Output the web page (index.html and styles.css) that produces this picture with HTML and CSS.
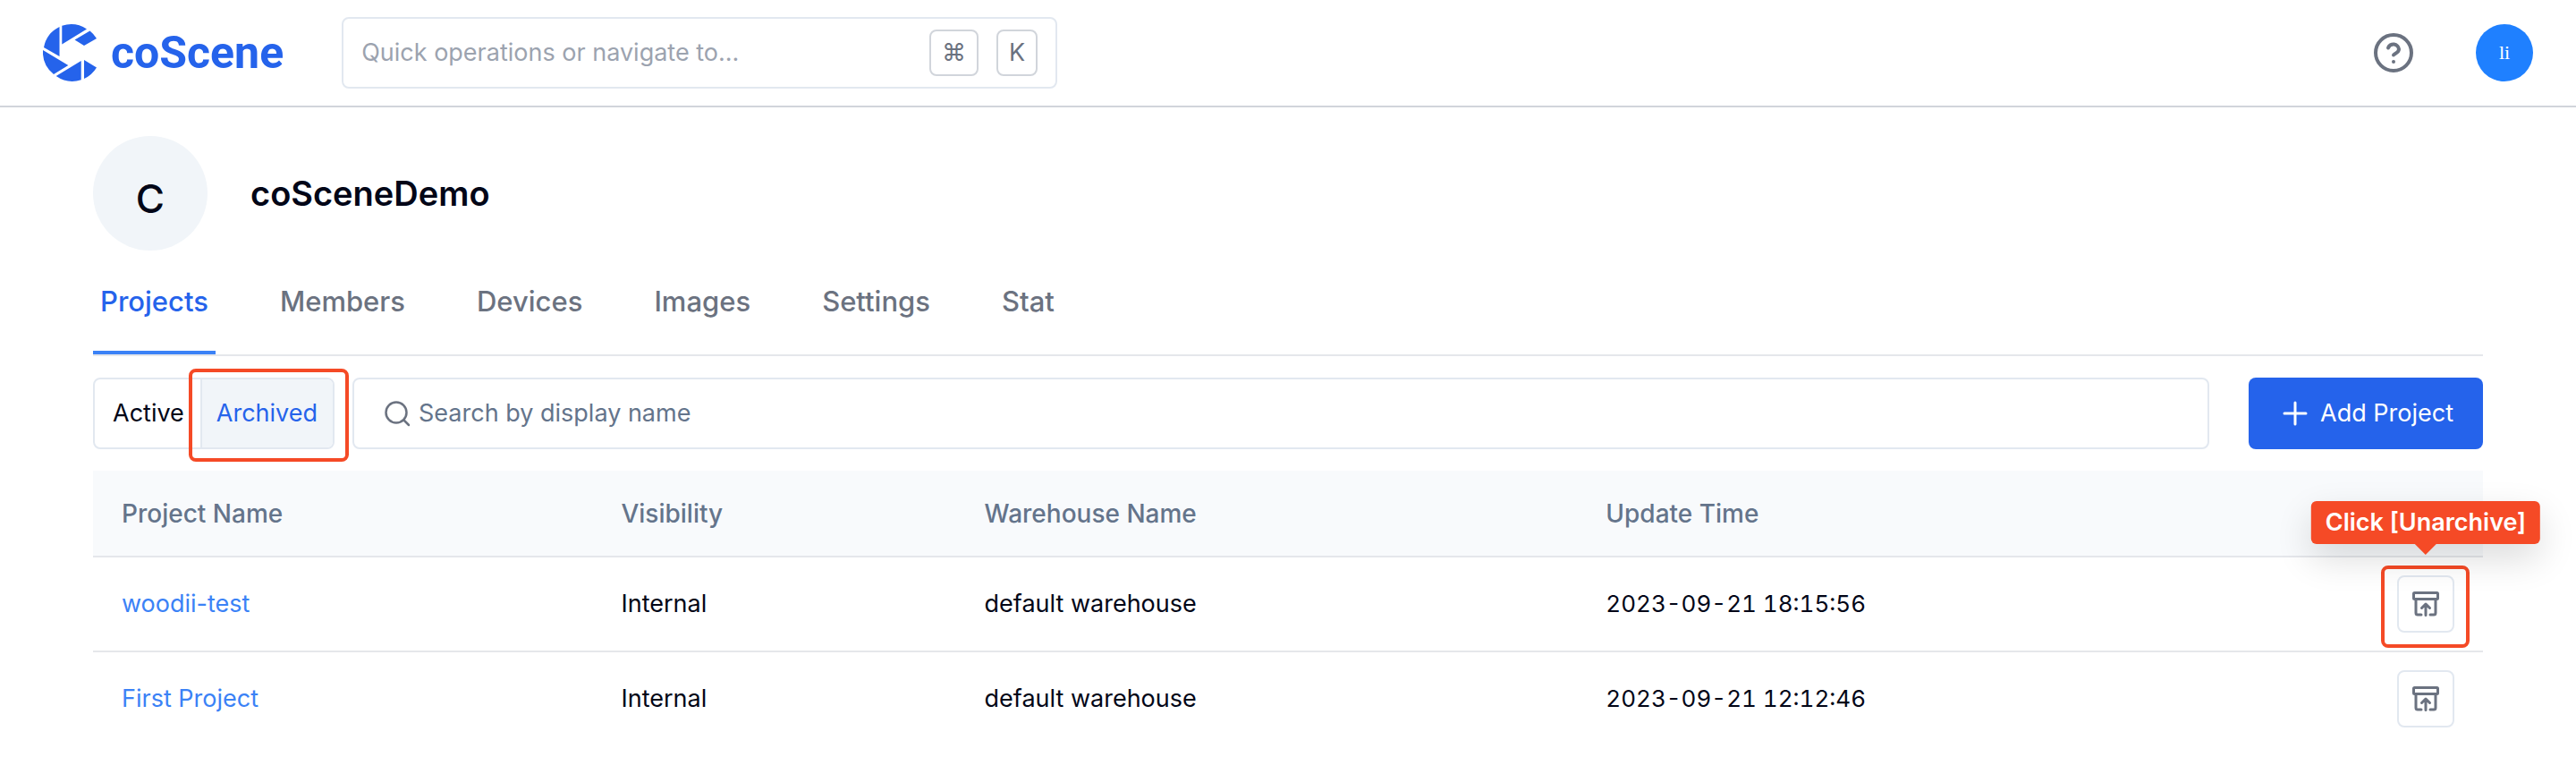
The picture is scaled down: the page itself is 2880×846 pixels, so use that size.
FILE: index.html
```html
<!DOCTYPE html>
<html lang="en">
<head>
<meta charset="utf-8">
<title>coScene</title>
<link rel="stylesheet" href="styles.css">
</head>
<body>
<svg class="sprite" aria-hidden="true">
  <symbol id="unarchive" viewBox="0 0 32 32">
    <g fill="none" stroke="currentColor" stroke-width="3" stroke-linejoin="round" stroke-linecap="round">
      <rect x="2.500" y="3.500" width="27" height="7" rx="1"/>
      <path d="M5 11v15a2 2 0 0 0 2 2h4M27 11v15a2 2 0 0 1-2 2h-4M16 28.500V17M11.500 20.500L16 16l4.500 4.500"/>
    </g>
  </symbol>
</svg>
<header class="topbar">
  <a class="brand" href="#" aria-label="coScene home">
    <svg class="brand-mark" viewBox="0 0 60 64" fill="currentColor" aria-hidden="true">
      <path d="M18.500 3V36L1 26A32 32 0 0 1 18.500 3zM21.300 1.800A32 32 0 0 1 49 5.500L21.300 22.500zM52.500 7.500A32 32 0 0 1 60 16L46 24 35.500 17.500zM0 29L28.300 46 12 56A32 32 0 0 1 0 29zM14.700 58L42.700 41V62.300A32 32 0 0 1 14.700 58zM46 40L60 48.500A32 32 0 0 1 46 61z"/>
    </svg>
    <span class="brand-name">coScene</span>
  </a>
  <label class="quick">
    <input class="quick-input" type="text" placeholder="Quick operations or navigate to..." aria-label="Quick operations">
    <kbd class="key">⌘</kbd>
    <kbd class="key">K</kbd>
  </label>
  <div class="account">
    <button class="help" type="button" aria-label="Help">
      <svg viewBox="0 0 48 48" fill="none" stroke="currentColor" stroke-width="4" stroke-linecap="round" aria-hidden="true">
        <circle cx="24" cy="24" r="20"/>
        <path d="M18 18.500a6.200 6.200 0 0 1 12 1.500c0 4-6 5.500-6 6.500"/>
        <path d="M24 34h.01"/>
      </svg>
    </button>
    <button class="avatar" type="button">li</button>
  </div>
</header>
<main class="page">
  <div class="org">
    <div class="org-badge">C</div>
    <h1 class="org-name">coSceneDemo</h1>
  </div>
  <nav class="tabs">
    <a class="tab active" href="#">Projects</a>
    <a class="tab" href="#">Members</a>
    <a class="tab" href="#">Devices</a>
    <a class="tab" href="#">Images</a>
    <a class="tab" href="#">Settings</a>
    <a class="tab" href="#">Stat</a>
  </nav>
  <div class="toolbar">
    <div class="segment">
      <button class="segment-item" type="button">Active</button>
      <button class="segment-item selected" type="button">Archived</button>
      <span class="marker marker-segment"></span>
    </div>
    <label class="search">
      <svg class="search-icon" viewBox="0 0 32 32" fill="none" stroke="currentColor" stroke-width="2.500" stroke-linecap="round" aria-hidden="true"><circle cx="15" cy="15" r="11.500"/><path d="M23.500 23.500l5.500 5.500"/></svg>
      <input class="search-input" type="text" placeholder="Search by display name" aria-label="Search by display name">
    </label>
    <button class="add" type="button">
      <svg class="add-icon" viewBox="0 0 32 32" fill="none" stroke="currentColor" stroke-width="3" stroke-linecap="round" aria-hidden="true"><path d="M16 4v24M4 16h24"/></svg>
      Add Project
    </button>
  </div>
  <table class="projects">
    <colgroup><col class="col-name"><col class="col-visibility"><col class="col-warehouse"><col></colgroup>
    <thead>
      <tr><th>Project Name</th><th>Visibility</th><th>Warehouse Name</th><th>Update Time</th><th aria-label="Actions"></th></tr>
    </thead>
    <tbody>
      <tr>
        <td><a class="link" href="#">woodii-test</a></td><td>Internal</td><td>default warehouse</td><td class="time">2023-09-21 18:15:56</td>
        <td class="actions">
          <div class="action">
            <button class="icon-button" type="button" aria-label="Unarchive"><svg class="icon" aria-hidden="true"><use href="#unarchive"/></svg></button>
            <span class="marker marker-action"></span>
            <span class="tip" role="tooltip">Click [Unarchive]</span>
          </div>
        </td>
      </tr>
      <tr>
        <td><a class="link" href="#">First Project</a></td><td>Internal</td><td>default warehouse</td><td class="time">2023-09-21 12:12:46</td>
        <td class="actions">
          <div class="action">
            <button class="icon-button" type="button" aria-label="Unarchive"><svg class="icon" aria-hidden="true"><use href="#unarchive"/></svg></button>
          </div>
        </td>
      </tr>
    </tbody>
  </table>
</main>
</body>
</html>
```
FILE: styles.css
```css
* { box-sizing: border-box; }
body { margin: 0; background: #fff; color: #020617; font: 27px/40px Inter, "Liberation Sans", sans-serif; }
button, input, kbd { margin: 0; font: inherit; color: inherit; }
button { padding: 0; border: 0; background: none; cursor: pointer; }
a { text-decoration: none; }
.sprite { display: none; }

.topbar { display: flex; align-items: center; height: 120px; padding: 0 48px; border-bottom: 2px solid #d1d5db; }
.brand { display: flex; align-items: center; gap: 16px; color: #2563eb; }
.brand-mark { width: 60px; height: 64px; }
.brand-name { font: 700 50px/64px Roboto, sans-serif; }
.quick { display: flex; align-items: center; gap: 20px; width: 800px; height: 80px; margin-left: 65px; padding: 0 20px; border: 2px solid #e2e8f0; border-radius: 8px; }
.quick-input, .search-input { flex: 1; min-width: 0; padding: 0; border: 0; outline: 0; background: none; }
.quick-input::placeholder { color: #9ca3af; opacity: 1; }
.key { display: flex; align-items: center; height: 52px; padding: 0 12px; border: 2px solid #d1d5db; border-radius: 8px; color: #6b7280; }
.account { display: flex; align-items: center; gap: 68px; margin-left: auto; }
.help { display: flex; width: 48px; height: 48px; color: #6b7280; }
.help svg { width: 48px; height: 48px; }
.avatar { width: 64px; height: 64px; border-radius: 50%; background: #1f80ff; color: #fff; font: 22px/64px "Liberation Serif", serif; }

.page { padding: 32px 104px; }
.org { display: flex; align-items: center; gap: 48px; }
.org-badge { width: 128px; height: 128px; padding-top: 12px; border-radius: 50%; background: #f1f5f9; font-size: 44px; font-weight: 500; line-height: 116px; text-align: center; }
.org-name { margin: 0; font-size: 38px; font-weight: 600; line-height: 56px; }
.tabs { display: flex; gap: 64px; height: 118px; border-bottom: 2px solid #e5e7eb; }
.tab { padding: 37px 8px 0; border-bottom: 4px solid transparent; color: #6b7280; font-size: 31px; font-weight: 500; line-height: 40px; }
.tab.active { border-color: #3b82f6; color: #2563eb; }

.toolbar { display: flex; margin: 24px 0; }
.segment { position: relative; display: flex; height: 80px; border: 2px solid #e2e8f0; border-radius: 8px; }
.segment-item { padding: 0 18px 0 20px; }
.segment-item.selected { padding: 0 17px 0 16px; border-left: 2px solid #e2e8f0; border-radius: 0 6px 6px 0; background: #f1f5f9; color: #2563eb; }
.marker { position: absolute; border: 4px solid #f54a26; border-radius: 8px; pointer-events: none; }
.marker-segment { inset: -12px -18px -16px 105px; }
.search { display: flex; flex: 1; align-items: center; gap: 8px; height: 80px; margin: 0 44px 0 20px; padding: 0 32px; border: 2px solid #e2e8f0; border-radius: 8px; }
.search-icon { width: 32px; height: 32px; color: #6b7280; }
.search-input::placeholder { color: #64748b; opacity: 1; }
.add { display: flex; align-items: center; gap: 12px; height: 80px; padding: 0 33px 0 36px; border-radius: 8px; background: #2563eb; color: #fff; }
.add-icon { width: 32px; height: 32px; }

.projects { width: 100%; border-collapse: separate; border-spacing: 0; table-layout: fixed; text-align: left; }
.col-name { width: 20.9%; }
.col-visibility { width: 15.2%; }
.col-warehouse { width: 26%; }
th { height: 97px; padding: 0 32px; border-bottom: 2px solid #e5e7eb; background: #f8fafc; color: #64748b; font-size: 28px; font-weight: 500; }
td { height: 106px; padding: 20px 32px; border-bottom: 2px solid #e5e7eb; }
tbody tr:last-child td { border-bottom-color: transparent; }
.time { font-size: 26px; font-variant-numeric: tabular-nums; }
.link { color: #3b82f6; }
.action { position: relative; width: 64px; height: 64px; margin-left: auto; }
.icon-button { display: flex; align-items: center; justify-content: center; width: 64px; height: 64px; border: 2px solid #e2e8f0; border-radius: 8px; color: #6b7280; }
.icon { width: 32px; height: 32px; }
.marker-action { inset: -11px -17px -17px -18px; }
.tip { position: absolute; bottom: 99px; left: 50%; padding: 4px 16px; border-radius: 6px; background: #f54a26; box-shadow: 0 16px 40px rgba(0, 0, 0, .14); color: #fff; font-weight: 600; white-space: nowrap; transform: translateX(-50%); }
.tip::after { content: ""; position: absolute; top: 100%; left: 50%; border: 12px solid transparent; border-top-color: #f54a26; transform: translateX(-50%); }
```
